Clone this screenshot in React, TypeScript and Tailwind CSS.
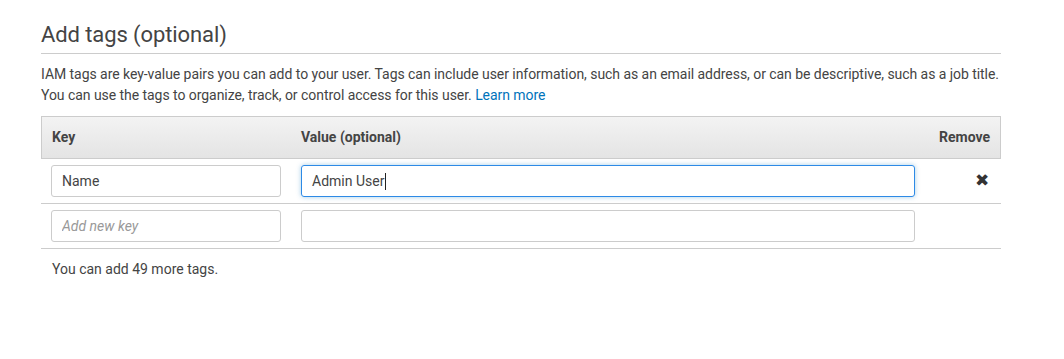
import React from 'react';

export default function App() {
  return (
    <div className="min-h-[359px] bg-white font-['Roboto',sans-serif] text-[#444]">
      <div className="ml-[41px] w-[960px] pt-[20px]">
        {/* Section title */}
        <h2 className="border-b border-[#ccc] pb-[3px] text-[22px] leading-[30px] tracking-[-0.1px] text-[#444]">
          Add tags (optional)
        </h2>
        <p className="mt-[10px] whitespace-nowrap text-[14px] leading-[21px] tracking-[-0.05px] text-[#444]">
          IAM tags are key-value pairs you can add to your user. Tags can include user information, such as an email address, or can be descriptive, such as a job title.
          <br />
          You can use the tags to organize, track, or control access for this user.{' '}
          <a href="#" className="text-[#0073bb]">Learn more</a>
        </p>

        {/* Tags table */}
        <div className="mt-[10px]">
          <div className="flex h-[43px] items-center border border-[#ccc] bg-gradient-to-b from-[#f3f3f3] to-[#e4e4e4] text-[14px] font-bold text-[#444]">
            <div className="w-[249px] pl-[10px]">Key</div>
            <div className="w-[634px] pl-[10px]">Value (optional)</div>
            <div className="flex-1 pr-[10px] text-right">Remove</div>
          </div>

          <div className="flex h-[45px] items-start border-b border-[#ccc] pt-[6px]">
            <div className="w-[250px] px-[10px]">
              <input
                defaultValue="Name"
                className="h-[32px] w-[230px] rounded-[3px] border border-[#ccc] px-[10px] text-[14px] text-[#444] outline-none"
              />
            </div>
            <div className="w-[634px] px-[10px]">
              <div className="flex h-[32px] w-[614px] items-center rounded-[3px] border border-[#2d8ae6] px-[10px] text-[14px] text-[#444] shadow-[0_0_5px_rgba(0,115,187,0.35)]">
                <span>Admin User</span>
                <span className="ml-px h-[17px] w-px bg-[#222]" />
              </div>
            </div>
            <div className="flex flex-1 justify-end pr-[12px] pt-[5px]">
              <span className="text-[17px] leading-[20px] text-[#333]">✖</span>
            </div>
          </div>

          <div className="flex h-[45px] items-start border-b border-[#ccc] pt-[6px]">
            <div className="w-[250px] px-[10px]">
              <input
                placeholder="Add new key"
                className="h-[32px] w-[230px] rounded-[3px] border border-[#ccc] px-[10px] text-[14px] text-[#444] outline-none placeholder:italic placeholder:text-[#999]"
              />
            </div>
            <div className="w-[634px] px-[10px]">
              <input className="h-[32px] w-[614px] rounded-[3px] border border-[#ccc] px-[10px] text-[14px] outline-none" />
            </div>
          </div>

          <p className="pl-[11px] pt-[10px] text-[14px] leading-[21px] text-[#444]">You can add 49 more tags.</p>
        </div>
      </div>
    </div>
  );
}
